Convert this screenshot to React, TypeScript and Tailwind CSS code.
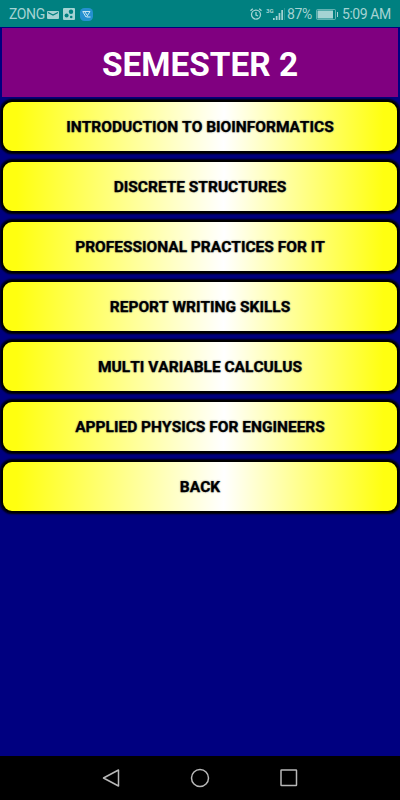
import * as React from 'react'

const courses = [
    'INTRODUCTION TO BIOINFORMATICS',
    'DISCRETE STRUCTURES',
    'PROFESSIONAL PRACTICES FOR IT',
    'REPORT WRITING SKILLS',
    'MULTI VARIABLE CALCULUS',
    'APPLIED PHYSICS FOR ENGINEERS',
    'BACK'
]

function StatusBar() {
    return (
        <div className="flex h-[27px] items-center bg-[#008080] px-[9px] pt-px text-[14px] leading-none text-[#a5d3d3]">
            <span className="w-[38px] whitespace-nowrap tracking-[-0.4px]">ZONG</span>
            <svg className="h-[9px] w-3" viewBox="0 0 12 9">
                <rect y="1" width="12" height="8" rx="1" fill="#a5d3d3" />
                <path d="M1 2.5l5 2.5 5-2.5" fill="none" stroke="#008080" strokeWidth="1.2" />
            </svg>
            <svg className="ml-1 size-3" viewBox="0 0 12 12">
                <rect width="12" height="12" rx="1" fill="#a5d3d3" />
                <circle cx="8" cy="3.7" r="2.2" fill="#008080" />
                <circle cx="3.6" cy="7.5" r="2" fill="#008080" />
                <circle cx="8.2" cy="9" r="1.3" fill="#008080" />
            </svg>
            <svg className="ml-[5px] size-[13px]" viewBox="0 0 13 13">
                <rect width="13" height="13" rx="4.5" fill="#2490d0" />
                <path d="M2.5 3.5H10L6.5 9h4M3 4l3 5M5 4l2 3" fill="none" stroke="#c5e5f2" strokeWidth="1" />
            </svg>
            <div className="ml-auto flex items-center">
                <svg className="size-3" viewBox="0 0 12 12" fill="none" stroke="#a5d3d3" strokeWidth="1.3">
                    <circle cx="6" cy="6.6" r="4.5" />
                    <path d="M6 4v3l2 1M.5 2.7l2.3-2M11.5 2.7L9.2.7" />
                </svg>
                <svg className="ml-1 h-3 w-[19px]" viewBox="0 0 19 12" fill="#a5d3d3">
                    <text x="0" y="5" fontSize="6" fontWeight="700" fontFamily="Roboto, sans-serif">3G</text>
                    <path d="M7 10h1.7v2H7zM9.8 8h1.7v4H9.8zM12.6 5h1.7v7h-1.7zM15.3 2H17v10h-1.7z" />
                    <path d="M18 0h.7v12H18z" opacity=".4" />
                </svg>
                <span className="ml-[2px] w-[29px] whitespace-nowrap tracking-[-0.4px]">87%</span>
                <svg className="h-[11px] w-[23px]" viewBox="0 0 23 11">
                    <rect x=".5" y=".5" width="19" height="10" rx="1" fill="none" stroke="#a5d3d3" opacity=".6" />
                    <rect x="1.5" y="1.5" width="15.5" height="8" fill="#a5d3d3" />
                    <path d="M21.5 3v5" stroke="#a5d3d3" />
                </svg>
                <span className="ml-[3px] w-[49px] whitespace-nowrap tracking-[-0.45px]">5:09 AM</span>
            </div>
        </div>
    )
}

function CourseButton({ label }: { label: string }) {
    return (
        <button
            type="button"
            className="h-[53px] w-full rounded-[11px] border-2 border-black bg-[linear-gradient(91deg,#ffff10_4%,#ffffff_56%,#ffff10_96%)] bg-origin-border pt-[3px] text-[15.5px] font-bold text-black shadow-[0_0_2px_1px_#000] [font-kerning:none] [-webkit-text-stroke:0.25px_#000] [text-shadow:0_0_2px_#888]"
        >
            {label}
        </button>
    )
}

function NavigationBar() {
    return (
        <nav className="flex h-11 items-center justify-center bg-black">
            <svg className="h-5 w-[200px]" viewBox="0 0 200 20" fill="none" stroke="#b8b8b8" strokeWidth="1.5" strokeLinejoin="round">
                <path d="M18.5 2v16L3.5 10z" />
                <circle cx="100" cy="10" r="8.5" />
                <rect x="181" y="2" width="15.5" height="15.5" rx=".5" />
            </svg>
        </nav>
    )
}

export default function App() {
    return (
        <div className="flex h-[800px] w-[400px] flex-col overflow-hidden bg-[#000080] font-[Roboto,sans-serif]">
            <StatusBar />
            <h1 className="mx-[2px] mt-px flex h-[69px] items-center justify-center bg-[#800080] pt-[4px] text-[33.4px] font-bold leading-none text-white">
                SEMESTER 2
            </h1>
            <main className="flex flex-1 flex-col gap-[7px] px-px pt-[3px]">
                {courses.map((label) => (
                    <CourseButton key={label} label={label} />
                ))}
            </main>
            <NavigationBar />
        </div>
    )
}
